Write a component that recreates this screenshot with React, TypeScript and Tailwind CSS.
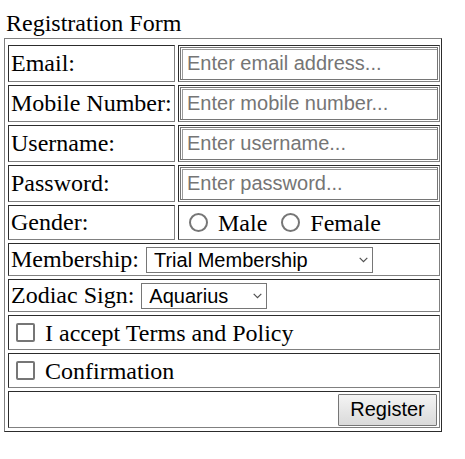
import React from 'react';

const cell = "border border-[gray] [border-style:inset]";
const serif = "font-['Liberation_Serif','Times_New_Roman',serif]";
const sans = "font-['Liberation_Sans',Arial,sans-serif]";

const Chevron = () => (
  <svg width="9" height="6" viewBox="0 0 9 6" className="pointer-events-none absolute right-[5px] top-1/2 -translate-y-1/2">
    <path d="M0.7 0.8 L4.5 4.6 L8.3 0.8" fill="none" stroke="#505050" strokeWidth="1.2" />
  </svg>
);

const TextRow = ({ label, placeholder, type = 'text' }: { label: string; placeholder: string; type?: string }) => (
  <div className="flex gap-[3px]">
    <div className={`${cell} w-[167px] h-[37px] flex items-center pl-[2px]`}>{label}</div>
    <div className={`${cell} w-[262px] h-[37px] p-px`}>
      <input
        type={type}
        placeholder={placeholder}
        className={`w-full h-full border border-[#767676] shadow-[inset_1px_1px_0_#fff,inset_2px_2px_0_#9a9a9a] pl-[6px] text-[20px] ${sans} text-black placeholder:text-[#757575] outline-none bg-white`}
      />
    </div>
  </div>
);

const Radio = ({ name }: { name: string }) => (
  <input
    type="radio"
    name={name}
    className="appearance-none w-[19px] h-[19px] rounded-full border-2 border-[#767676] bg-white shrink-0"
  />
);

const Check = () => (
  <input
    type="checkbox"
    className="appearance-none w-[19px] h-[19px] rounded-[2px] border-2 border-[#767676] bg-white shrink-0"
  />
);

export default function App() {
  return (
    <div className={`bg-white min-h-[459px] w-[465px] text-black text-[24px] leading-[27px] ${serif}`}>
      <div className="h-[38px] pt-[10px] pl-[6px]">Registration Form</div>

      <form className="ml-[4px] w-[438px] border border-[gray] [border-style:outset] pt-[6px] pb-[3px] pl-[3px] pr-px flex flex-col gap-[3px]">
        <TextRow label="Email:" placeholder="Enter email address..." type="email" />
        <TextRow label="Mobile Number:" placeholder="Enter mobile number..." />
        <TextRow label="Username:" placeholder="Enter username..." />
        <TextRow label="Password:" placeholder="Enter password..." type="password" />

        <div className="flex gap-[3px]">
          <div className={`${cell} w-[167px] h-[35px] flex items-center pl-[2px]`}>Gender:</div>
          <div className={`${cell} w-[262px] h-[35px] flex items-center pl-[10px]`}>
            <Radio name="gender" />
            <span className="ml-[10px] pt-[2px]">Male</span>
            <span className="ml-[14px] flex"><Radio name="gender" /></span>
            <span className="ml-[10px] pt-[2px]">Female</span>
          </div>
        </div>

        <div className={`${cell} h-[33px] flex items-center pl-[2px]`}>
          <span>Membership:</span>
          <div className="relative ml-[7px]">
            <select defaultValue="trial" className={`appearance-none w-[227px] h-[26px] border border-[#767676] bg-white pl-[7px] text-[20px] leading-[24px] ${sans} text-black outline-none`}>
              <option value="trial">Trial Membership</option>
              <option value="monthly">Monthly Membership</option>
              <option value="annual">Annual Membership</option>
            </select>
            <Chevron />
          </div>
        </div>

        <div className={`${cell} h-[33px] flex items-center pl-[2px]`}>
          <span>Zodiac Sign:</span>
          <div className="relative ml-[7px]">
            <select defaultValue="aquarius" className={`appearance-none w-[126px] h-[26px] border border-[#767676] bg-white pl-[7px] text-[20px] leading-[24px] ${sans} text-black outline-none`}>
              <option value="aquarius">Aquarius</option>
              <option value="pisces">Pisces</option>
              <option value="aries">Aries</option>
            </select>
            <Chevron />
          </div>
        </div>

        <div className={`${cell} h-[35px] flex items-center pl-[7px]`}>
          <Check />
          <span className="ml-[10px] pt-[2px]">I accept Terms and Policy</span>
        </div>

        <div className={`${cell} h-[35px] flex items-center pl-[7px]`}>
          <Check />
          <span className="ml-[10px] pt-[2px]">Confirmation</span>
        </div>

        <div className={`${cell} h-[37px] flex items-center justify-end pr-[2px]`}>
          <button
            type="button"
            className={`w-[99px] h-[32px] border border-[#767676] rounded-[1px] bg-linear-to-b from-[#f4f4f4] to-[#dadada] text-[20px] ${sans} text-black`}
          >
            Register
          </button>
        </div>
      </form>
    </div>
  );
}
